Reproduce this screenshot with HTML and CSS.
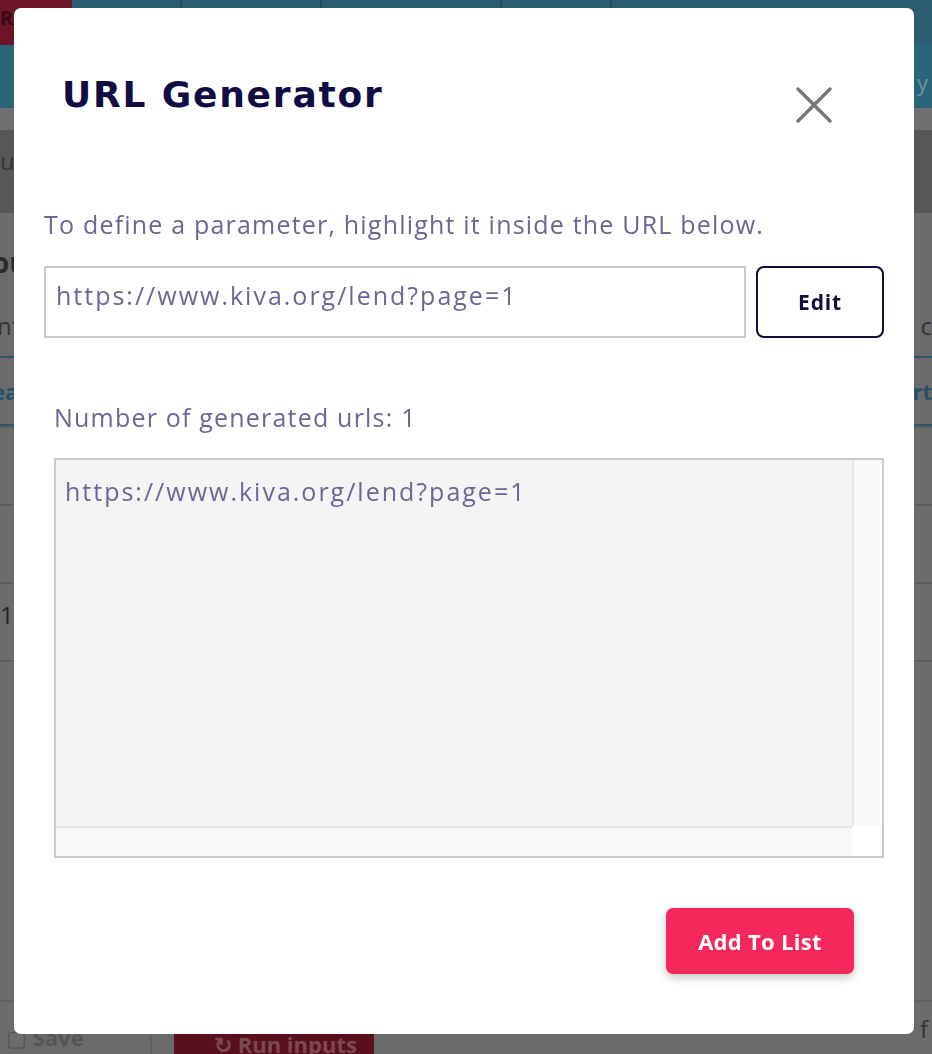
FILE: index.html
```html
<!DOCTYPE html>
<html lang="en">
<head>
<meta charset="utf-8">
<title>URL Generator</title>
<link rel="stylesheet" href="styles.css">
</head>
<body>
<div class="app">
  <header class="topbar">
    <div class="toolbar">
      <div class="tool tool-run">Ru</div>
      <div class="tool">✎ Edit</div>
      <div class="tool tool-wide">▢ Duplicate</div>
      <div class="tool tool-wider">▤ Add To Playlist</div>
      <div class="tool">🗑 Delete</div>
    </div>
    <div class="topbar-main"><span class="topbar-right">y</span></div>
  </header>
  <div class="band-light"></div>
  <div class="band-dark"><span class="crumb">u</span></div>
  <section class="content">
    <div class="heading">ou</div>
    <div class="info"><span>nf</span><span>t c</span></div>
    <div class="tabs"><span>ea</span><span>rt</span></div>
    <div class="row"></div>
    <div class="row"></div>
    <div class="row row-num"><span>1</span></div>
  </section>
  <footer class="footbar">
    <div class="save">▢ <b>Save</b></div>
    <div class="run-inputs">↻ Run inputs</div>
    <span class="foot-right">f</span>
  </footer>
</div>

<div class="modal" role="dialog" aria-labelledby="modal-title">
  <div class="modal-header">
    <h1 id="modal-title" class="modal-title">URL Generator</h1>
    <button class="close" aria-label="Close">
      <svg width="36" height="36" viewBox="0 0 36 36"><path d="M2 2 L34 34 M34 2 L2 34" stroke="#777" stroke-width="3.4" stroke-linecap="round" fill="none"/></svg>
    </button>
  </div>
  <div class="modal-body">
    <p class="hint">To define a parameter, highlight it inside the URL below.</p>
    <div class="url-row">
      <div class="url-input">https://www.kiva.org/lend?page=1</div>
      <button class="edit-btn">Edit</button>
    </div>
    <div class="generated">
      <p class="count">Number of generated urls: 1</p>
      <div class="output">
        <div class="output-main">
          <div class="output-text">https://www.kiva.org/lend?page=1</div>
          <div class="vscroll"></div>
        </div>
        <div class="output-bottom">
          <div class="hscroll"></div>
          <div class="corner"></div>
        </div>
      </div>
    </div>
    <div class="actions">
      <button class="add-btn">Add To List</button>
    </div>
  </div>
</div>
</body>
</html>
```
FILE: styles.css
```css
* { box-sizing: border-box; }
html, body { margin: 0; padding: 0; }
body {
  width: 932px;
  height: 1054px;
  overflow: hidden;
  background: #6b6b6b;
  font-family: "Open Sans", "Liberation Sans", sans-serif;
}

/* ---------- dimmed background app ---------- */
.app { height: 1054px; display: flex; flex-direction: column; color: #2a2a2a; }
.topbar { height: 108px; background: #2a6478; display: flex; flex-direction: column; }
.toolbar { height: 45px; display: flex; background: #2b5d71; color: #5a8092; font-size: 20px; font-weight: 700; }
.tool { width: 110px; border-right: 2px solid #24495a; padding: 4px 20px; white-space: nowrap; overflow: hidden; }
.tool-run { width: 72px; background: #6c1428; color: #3a0a14; border: 0; padding-left: 0; }
.tool-wide { width: 140px; }
.tool-wider { width: 180px; }
.topbar-main { flex: 1; display: flex; justify-content: flex-end; padding: 22px 4px 0 0; color: #6d93a3; font-size: 22px; }
.band-light { height: 22px; background: #707070; }
.band-dark { height: 83px; background: #575757; padding: 14px 0 0 0; font-size: 24px; color: #333; }
.content { flex: 1; display: flex; flex-direction: column; }
.heading { font-size: 28px; font-weight: 700; color: #2a2a2a; margin-top: 30px; margin-left: -8px; }
.info { display: flex; justify-content: space-between; font-size: 24px; color: #333; margin-top: 28px; margin-left: -3px; }
.tabs { margin-top: 14px; height: 70px; border-top: 2px solid #28566f; border-bottom: 2px solid #28566f; display: flex; justify-content: space-between; align-items: center; font-size: 22px; font-weight: 700; color: #24506a; margin-left: -8px; }
.row { height: 78px; border-top: 2px solid #5d5d5d; }
.row:first-of-type { height: 22px; }
.row-num { font-size: 24px; color: #222; padding-top: 14px; height: 80px; border-bottom: 2px solid #5d5d5d; }
.footbar { height: 54px; border-top: 2px solid #5f5f5f; display: flex; align-items: flex-end; }
.save { width: 152px; height: 52px; border-right: 2px solid #5f5f5f; padding: 20px 0 0 6px; color: #555; font-size: 22px; }
.run-inputs { margin-left: 22px; width: 200px; height: 20px; background: #5a0f1f; color: #7a4a52; font-size: 22px; font-weight: 700; padding-left: 40px; overflow: hidden; line-height: 20px; }
.foot-right { margin-left: auto; align-self: center; color: #333; font-size: 24px; padding-right: 4px; }

/* ---------- modal ---------- */
.modal {
  position: fixed;
  left: 14px;
  top: 8px;
  width: 900px;
  height: 1026px;
  background: #fff;
  border-radius: 7px;
  display: flex;
  flex-direction: column;
}
.modal-header {
  display: flex;
  justify-content: space-between;
  align-items: flex-start;
  padding: 65px 82px 0 48px;
  height: 200px;
}
.modal-title {
  margin: 0;
  font-family: "DejaVu Sans", "Open Sans", sans-serif;
  font-size: 36px;
  line-height: 44px;
  font-weight: 700;
  color: #100c44;
  letter-spacing: 1.8px;
}
.close {
  margin-top: 14px;
  padding: 0;
  border: 0;
  background: none;
  width: 36px;
  height: 36px;
}
.modal-body { padding: 0 30px; color: #6b6696; }
.hint { margin: 0; font-size: 25px; line-height: 32px; white-space: nowrap; letter-spacing: 1.2px; }
.url-row { display: flex; gap: 10px; margin-top: 26px; }
.url-input {
  width: 702px;
  height: 72px;
  border: 2px solid #cccccc;
  padding: 12px 10px;
  font-size: 25px;
  line-height: 30px;
  color: #6b6696;
  letter-spacing: 2px;
}
.edit-btn {
  width: 128px;
  height: 72px;
  border: 2px solid #100c3c;
  border-radius: 8px;
  background: #fff;
  font-family: inherit;
  font-size: 21px;
  font-weight: 700;
  color: #100c3c;
  padding: 0;
  letter-spacing: 0.8px;
}
.generated { padding-left: 10px; margin-top: 63px; }
.count { margin: 0; font-size: 25px; line-height: 32px; letter-spacing: 1.2px; }
.output {
  margin-top: 25px;
  width: 830px;
  height: 400px;
  border: 2px solid #cccccc;
  display: flex;
  flex-direction: column;
  background: #f4f4f4;
}
.output-main { flex: 1; display: flex; }
.output-text { flex: 1; padding: 16px 9px; font-size: 25px; line-height: 30px; color: #6b6696; letter-spacing: 2px; }
.vscroll { width: 30px; background: #f9f9f9; border-left: 2px solid #e6e6e6; }
.output-bottom { height: 30px; display: flex; }
.hscroll { flex: 1; background: #f8f8f8; border-top: 2px solid #e6e6e6; }
.corner { width: 30px; background: #fff; }
.actions { display: flex; justify-content: flex-end; padding-right: 30px; margin-top: 50px; }
.add-btn {
  width: 188px;
  height: 66px;
  border: 0;
  border-radius: 7px;
  background: #f4285a;
  color: #fff;
  font-family: inherit;
  font-size: 22px;
  font-weight: 700;
  letter-spacing: 0.3px;
  box-shadow: 0 4px 8px rgba(0,0,0,0.22);
}
```
